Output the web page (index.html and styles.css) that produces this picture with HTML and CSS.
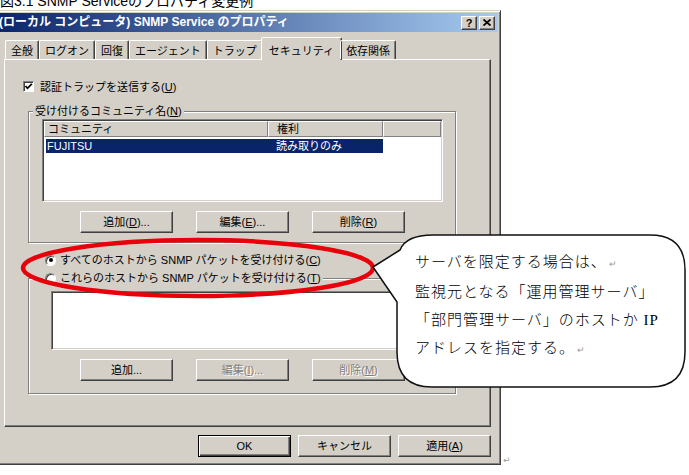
FILE: index.html
```html
<!DOCTYPE html>
<html lang="ja">
<head>
  <meta charset="UTF-8">
  <title>SNMP Service のプロパティ</title>
  <link rel="stylesheet" href="styles.css">
</head>
<body>
  <p class="caption">図3.1 SNMP Serviceのプロパティ変更例</p>

  <div class="figure">
    <div class="dialog">
      <!-- window caption -->
      <div class="titlebar">
        <span class="title">(ローカル コンピュータ) SNMP Service のプロパティ</span>
        <div class="caption-buttons">
          <span class="cap-btn">?</span>
          <span class="cap-btn">
            <svg width="8" height="7" viewBox="0 0 8 7"><path d="M0.5 0.5 L7.5 6.5 M7.5 0.5 L0.5 6.5" stroke="#000" stroke-width="1.8"/></svg>
          </span>
        </div>
      </div>

      <div class="sheet">
        <div class="tabs">
          <span class="tab">全般</span>
          <span class="tab">ログオン</span>
          <span class="tab">回復</span>
          <span class="tab">エージェント</span>
          <span class="tab">トラップ</span>
          <span class="tab active">セキュリティ</span>
          <span class="tab">依存関係</span>
        </div>

        <div class="panel">
          <div class="check-row">
            <span class="checkbox">
              <svg width="9" height="9" viewBox="0 0 9 9"><path d="M1.5 4 L3.5 6.3 L7.8 1.8" fill="none" stroke="#000" stroke-width="1.7"/></svg>
            </span>
            <span>認証トラップを送信する(<u>U</u>)</span>
          </div>

          <div class="group community">
            <div class="group-title">受け付けるコミュニティ名(<u>N</u>)</div>
            <div class="sunken listview">
              <div class="lv-header">
                <span class="lv-col">コミュニティ</span>
                <span class="lv-col second">権利</span>
                <span class="lv-col"></span>
              </div>
              <div class="lv-row selected">
                <span>FUJITSU</span>
                <span class="second">読み取りのみ</span>
              </div>
            </div>
            <div class="button-row">
              <span class="btn">追加(<u>D</u>)...</span>
              <span class="btn">編集(<u>E</u>)...</span>
              <span class="btn">削除(<u>R</u>)</span>
            </div>
          </div>

          <div class="radio-row first">
            <span class="radio checked"></span>
            <span>すべてのホストから SNMP パケットを受け付ける(<u>C</u>)</span>
          </div>

          <div class="group hosts">
            <div class="group-title radio-row">
              <span class="radio"></span>
              <span>これらのホストから SNMP パケットを受け付ける(<u>T</u>)</span>
            </div>
            <div class="sunken hostlist"></div>
            <div class="button-row">
              <span class="btn">追加...</span>
              <span class="btn disabled">編集(<u>I</u>)...</span>
              <span class="btn disabled">削除(<u>M</u>)</span>
            </div>
          </div>
        </div>

        <div class="actions">
          <span class="btn default">OK</span>
          <span class="btn">キャンセル</span>
          <span class="btn">適用(<u>A</u>)</span>
        </div>
      </div>
    </div>
    <span class="para-mark">↵</span>
  </div>

  <!-- annotation: red ring round the radio options, and the callout -->
  <svg class="annotation" width="689" height="475" viewBox="0 0 689 475">
    <ellipse cx="198" cy="268" rx="175" ry="28" fill="none" stroke="#e8000a" stroke-width="4.5"/>
    <path d="M373 267 L400 250 C404 240 415 235 433 235 L650 235 Q685 235 685 270 L685 352 Q685 387 650 387 L432 387 Q397 387 397 352 L397 302 Z"
          fill="#fff" stroke="#111" stroke-width="1.5" stroke-linejoin="round"/>
  </svg>

  <div class="callout-text">
    <p>サーバを限定する場合は、<span class="para-mark">↵</span></p>
    <p>監視元となる「運用管理サーバ」</p>
    <p>「部門管理サーバ」のホストか IP</p>
    <p>アドレスを指定する。<span class="para-mark">↵</span></p>
  </div>
</body>
</html>
```

FILE: styles.css
```css
* {
  box-sizing: border-box;
  margin: 0;
  padding: 0;
}

body {
  position: relative;
  width: 689px;
  height: 475px;
  overflow: hidden;
  background: #fff;
  color: #000;
  font-family: "Liberation Sans", "Noto Sans CJK JP", sans-serif;
  font-size: 11px;
}

u {
  text-decoration: underline;
  text-underline-offset: 1px;
}

.caption {
  height: 16px;
  margin-top: -7px;
  font-size: 14px;
  line-height: 16px;
  white-space: nowrap;
}

.figure {
  display: flex;
  align-items: flex-end;
  margin-top: 1px;
}

/* Windows 2000 style dialog frame */
.dialog {
  width: 507px;
  margin-left: -6px;
  padding: 2px 2px 7px;
  background: #d4d0c8;
  border: 1px solid;
  border-color: #d4d0c8 #404040 #404040 #d4d0c8;
  box-shadow: inset 1px 1px #fff, inset -1px -1px #808080;
}

.titlebar {
  display: flex;
  align-items: center;
  justify-content: space-between;
  height: 19px;
  padding: 0 3px 0 2px;
  background: linear-gradient(to right, #0a246a, #a6caf0);
}

.title {
  color: #fff;
  font-size: 12px;
  font-weight: bold;
  line-height: 19px;
  white-space: nowrap;
}

.caption-buttons {
  display: flex;
  gap: 2px;
}

.cap-btn {
  display: flex;
  align-items: center;
  justify-content: center;
  width: 16px;
  height: 14px;
  background: #d4d0c8;
  border: 1px solid;
  border-color: #fff #404040 #404040 #fff;
  box-shadow: inset -1px -1px #808080;
  font-size: 11px;
  font-weight: bold;
  line-height: 12px;
}

.sheet {
  padding: 0 7px;
}

/* tab strip */
.tabs {
  position: relative;
  z-index: 1;
  display: flex;
  align-items: flex-end;
  height: 22px;
  margin-top: 5px;
  padding-left: 1px;
}

.tab {
  height: 19px;
  padding: 2px 5px 0;
  line-height: 16px;
  white-space: nowrap;
  border: 1px solid;
  border-bottom: 0;
  border-color: #fff #404040 transparent #fff;
  border-radius: 2px 2px 0 0;
  box-shadow: inset -1px 0 #808080;
}

.tab.active {
  height: 23px;
  margin: 0 -2px -1px;
  padding: 5px 7px 0;
  background: #d4d0c8;
}

.panel {
  height: 368px;
  border: 1px solid;
  border-color: #fff #404040 #404040 #fff;
  box-shadow: inset -1px -1px #808080;
}

.check-row {
  display: flex;
  align-items: center;
  gap: 6px;
  height: 14px;
  margin: 19px 0 0 18px;
}

.checkbox {
  display: flex;
  align-items: center;
  justify-content: center;
  width: 11px;
  height: 11px;
  background: #fff;
  border: 1px solid;
  border-color: #808080 #fff #fff #808080;
  box-shadow: inset 1px 1px #404040;
}

/* etched group boxes */
.group {
  width: 428px;
  margin-left: 23px;
  border: 1px solid #808080;
  box-shadow: 1px 1px #fff, inset 1px 1px #fff;
}

.group-title {
  width: fit-content;
  margin: -8px 0 0 -9px;
  padding: 0 2px;
  background: #d4d0c8;
  line-height: 14px;
  white-space: nowrap;
}

.community {
  margin-top: 18px;
  padding: 0 12px 9px 13px;
}

.hosts {
  margin-top: 11px;
  padding: 0 21px 12px 22px;
}

.hosts .group-title {
  margin-left: -8px;
}

.sunken {
  background: #fff;
  border: 1px solid;
  border-color: #808080 #fff #fff #808080;
  box-shadow: inset 1px 1px #404040, inset -1px -1px #d4d0c8;
  padding: 1px;
}

.listview {
  height: 83px;
  margin-top: 1px;
}

.lv-header {
  display: grid;
  grid-template-columns: 224px 115px 1fr;
  height: 16px;
}

.lv-col {
  padding-left: 3px;
  background: #d4d0c8;
  border: 1px solid;
  border-color: #fff #808080 #808080 #fff;
  line-height: 14px;
}

.lv-col.second {
  padding-left: 8px;
}

.lv-row {
  display: grid;
  grid-template-columns: 222px 115px;
  width: 337px;
  height: 14px;
  margin: 2px 0 0 2px;
  padding-left: 1px;
  line-height: 14px;
}

.lv-row .second {
  padding-left: 7px;
}

.lv-row.selected {
  background: #0a246a;
  color: #fff;
}

.hostlist {
  height: 59px;
  margin-top: 6px;
}

.button-row {
  display: flex;
  justify-content: center;
  gap: 23px;
  margin-top: 9px;
}

.btn {
  width: 93px;
  height: 22px;
  background: #d4d0c8;
  border: 1px solid;
  border-color: #fff #404040 #404040 #fff;
  box-shadow: inset -1px -1px #808080;
  text-align: center;
  line-height: 20px;
  white-space: nowrap;
}

.btn.disabled {
  color: #808080;
  text-shadow: 1px 1px #fff;
}

.btn.default {
  border-color: #000;
  box-shadow: inset 1px 1px #fff, inset -1px -1px #404040, inset -2px -2px #808080;
}

.radio-row {
  display: flex;
  align-items: center;
  gap: 4px;
  height: 14px;
  line-height: 14px;
  white-space: nowrap;
}

.radio-row.first {
  margin: 10px 0 0 40px;
}

.radio {
  display: flex;
  align-items: center;
  justify-content: center;
  width: 11px;
  height: 11px;
  background: #fff;
  border: 1px solid;
  border-color: #808080 #fff #fff #808080;
  border-radius: 50%;
  box-shadow: inset 1px 1px #404040;
}

.radio.checked::after {
  content: "";
  width: 4px;
  height: 4px;
  border-radius: 50%;
  background: #000;
}

.actions {
  display: flex;
  justify-content: flex-end;
  gap: 7px;
  margin-top: 8px;
}

.para-mark {
  margin-left: 2px;
  color: #9a9a9a;
  font-family: "DejaVu Sans", sans-serif;
  font-size: 9px;
  letter-spacing: 0;
}

/* callout over the dialog */
.annotation {
  position: absolute;
  top: 0;
  left: 0;
  pointer-events: none;
}

.callout-text {
  position: absolute;
  top: 248px;
  left: 415px;
  font-family: "Liberation Serif", "Noto Sans CJK JP", serif;
  font-size: 15px;
  font-weight: 300;
  letter-spacing: 1px;
  line-height: 28px;
  white-space: nowrap;
}
```
